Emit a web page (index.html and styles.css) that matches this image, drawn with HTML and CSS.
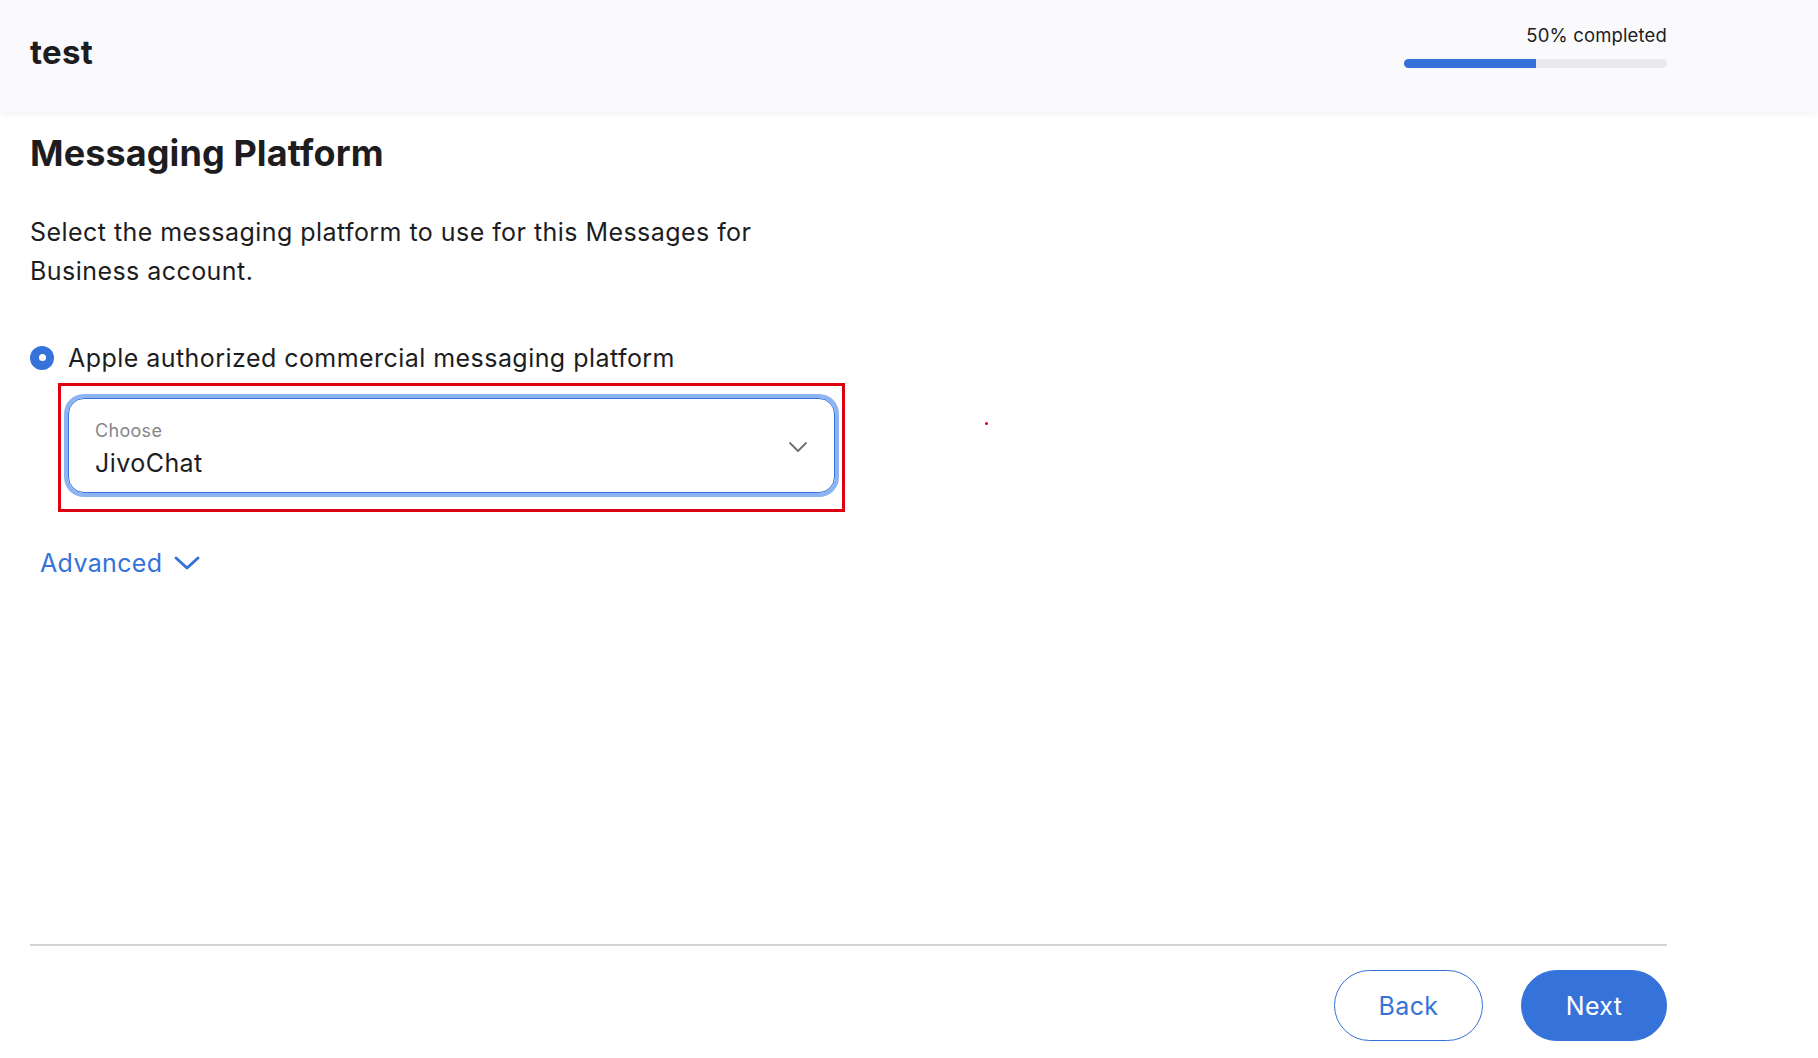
FILE: index.html
```html
<!DOCTYPE html>
<html lang="en">
<head>
<meta charset="utf-8">
<title>Messaging Platform</title>
<link rel="stylesheet" href="styles.css">
</head>
<body>
<div class="page">
  <header class="topbar">
    <div class="topbar-inner">
      <div class="brand">test</div>
      <div class="progress">
        <div class="progress-label">50% completed</div>
        <div class="progress-track"><div class="progress-fill" style="width:50%"></div></div>
      </div>
    </div>
  </header>

  <main class="content">
    <h1 class="title">Messaging Platform</h1>
    <p class="intro">Select the messaging platform to use for this Messages for Business account.</p>

    <div class="radio-row">
      <span class="radio"><span class="radio-dot"></span></span>
      <span class="radio-label">Apple authorized commercial messaging platform</span>
    </div>

    <div class="highlight">
      <div class="select">
        <div class="select-text">
          <div class="select-label">Choose</div>
          <div class="select-value">JivoChat</div>
        </div>
        <svg class="select-chevron" width="20" height="12" viewBox="0 0 20 12"><path d="M2 2 L10 10 L18 2" fill="none" stroke="#6e6e73" stroke-width="1.8" stroke-linecap="round" stroke-linejoin="round"/></svg>
      </div>
    </div>

    <div class="advanced">
      <span>Advanced</span>
      <svg width="28" height="18" viewBox="0 0 28 18"><path d="M3 4 L14 14 L25 4" fill="none" stroke="#3572d9" stroke-width="3" stroke-linecap="round" stroke-linejoin="round"/></svg>
    </div>

    <span class="cursor-dot"></span>
  </main>

  <footer class="footer">
    <div class="divider"></div>
    <div class="actions">
      <button class="btn btn-outline">Back</button>
      <button class="btn btn-primary">Next</button>
    </div>
  </footer>
</div>
</body>
</html>
```

FILE: styles.css
```css
* { box-sizing: border-box; }
html, body { margin: 0; padding: 0; }
body {
  font-family: Inter, "Liberation Sans", Arial, sans-serif;
  color: #1d1d1f;
  background: #ffffff;
}
.page {
  height: 100vh;
  display: flex;
  flex-direction: column;
  overflow: hidden;
}
.topbar {
  height: 112px;
  background: #fafafc;
  box-shadow: 0 2px 6px rgba(0,0,0,0.06);
  flex: none;
  position: relative;
  z-index: 1;
}
.topbar-inner {
  height: 100%;
  padding: 0 151px 0 30px;
  display: flex;
  justify-content: space-between;
  align-items: center;
}
.brand {
  font-size: 33px;
  font-weight: 700;
  letter-spacing: 0.3px;
  margin-top: -8px;
}
.progress {
  width: 263px;
  display: flex;
  flex-direction: column;
  align-items: flex-end;
  margin-top: -21px;
}
.progress-label {
  font-size: 18.5px;
  line-height: 24px;
  letter-spacing: 0.15px;
  color: #1d1d1f;
}
.progress-track {
  width: 100%;
  height: 9px;
  border-radius: 5px;
  background: #e8e8ed;
  margin-top: 12px;
  overflow: hidden;
}
.progress-fill {
  height: 100%;
  background: #3572d9;
}
.content {
  flex: 1;
  padding: 0 151px 0 30px;
  position: relative;
}
.title {
  margin: 19px 0 0;
  font-size: 36px;
  line-height: 44px;
  font-weight: 700;
  letter-spacing: 0.1px;
}
.intro {
  margin: 38px 0 0;
  max-width: 760px;
  font-size: 25px;
  line-height: 39px;
  letter-spacing: 0.45px;
}
.radio-row {
  margin-top: 47px;
  display: flex;
  align-items: center;
  height: 39px;
}
.radio {
  width: 24px;
  height: 24px;
  border-radius: 50%;
  background: #3572d9;
  display: flex;
  align-items: center;
  justify-content: center;
  margin-right: 14px;
}
.radio-dot {
  width: 7px;
  height: 7px;
  border-radius: 50%;
  background: #fff;
}
.radio-label {
  font-size: 25px;
  letter-spacing: 0.45px;
}
.highlight {
  margin: 6px 0 0 28px;
  width: 787px;
  border: 3px solid #dd0010;
  padding: 12px 7px 16px 7px;
}
.select {
  height: 95px;
  border: 1px solid #3572d9;
  border-radius: 16px;
  box-shadow: 0 0 0 4px #8cb3f2;
  display: flex;
  align-items: center;
  justify-content: space-between;
  padding: 0 26px 0 26px;
}
.select-text { display: flex; flex-direction: column; margin-top: 8px; }
.select-label {
  font-size: 18px;
  line-height: 22px;
  letter-spacing: 0.3px;
  color: #86868b;
}
.select-value {
  font-size: 25px;
  line-height: 34px;
  letter-spacing: 0.45px;
  margin-top: 4px;
}
.select-chevron { margin-top: 2px; }
.advanced {
  margin: 31px 0 0 10px;
  display: flex;
  align-items: center;
  gap: 11px;
  height: 39px;
  color: #3572d9;
  font-size: 25px;
  letter-spacing: 0.35px;
}
.advanced svg { margin-top: 1px; }
.cursor-dot {
  position: absolute;
  left: 985px;
  top: 310px;
  width: 3px;
  height: 3px;
  border-radius: 50%;
  background: #dd0010;
}
.footer {
  flex: none;
  padding: 0 151px 17px 30px;
}
.divider {
  height: 2px;
  background: #d2d2d7;
}
.actions {
  margin-top: 24px;
  display: flex;
  justify-content: flex-end;
  gap: 38px;
}
.btn {
  height: 71px;
  border-radius: 36px;
  font-family: inherit;
  font-size: 25px;
  letter-spacing: 0.35px;
  padding: 0;
  cursor: pointer;
}
.btn-outline {
  width: 149px;
  background: #fff;
  border: 1px solid #3572d9;
  color: #3572d9;
}
.btn-primary {
  width: 146px;
  background: #3572d9;
  border: 1px solid #3572d9;
  color: #fff;
}
```
